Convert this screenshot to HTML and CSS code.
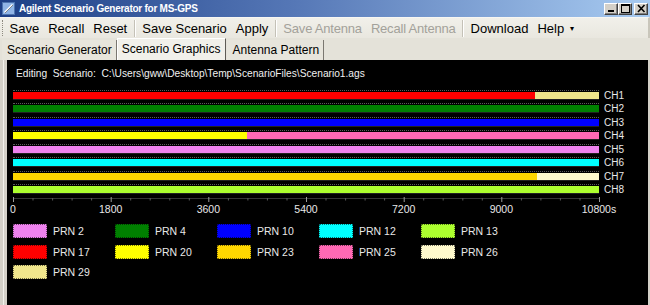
FILE: index.html
```html
<!DOCTYPE html>
<html>
<head>
<meta charset="utf-8">
<link rel="stylesheet" href="styles.css">
</head>
<body>
<div class="window">
  <div class="titlebar">
    <svg class="appicon" width="13" height="13" viewBox="0 0 13 13">
      <rect x="0.5" y="0.5" width="12" height="12" fill="#8fb4e6" stroke="#4d74b0"/>
      <path d="M2.5 10.5 L10.5 2.5" stroke="#ffffff" stroke-width="1.6"/>
      <path d="M3 11 L11 3" stroke="#6b6b6b" stroke-width="0.8"/>
    </svg>
    <span class="title">Agilent Scenario Generator for MS-GPS</span>
    <div class="winbtns">
      <span class="wb">
        <svg width="11" height="9" viewBox="0 0 11 9"><rect x="2" y="6" width="6" height="2" fill="#000"/></svg>
      </span>
      <span class="wb">
        <svg width="11" height="9" viewBox="0 0 11 9"><rect x="1.5" y="0.5" width="8" height="8" fill="none" stroke="#000"/><rect x="1" y="0" width="9" height="2" fill="#000"/></svg>
      </span>
      <span class="wb close">
        <svg width="11" height="9" viewBox="0 0 11 9"><path d="M2 1 L8.5 8 M8.5 1 L2 8" stroke="#000" stroke-width="1.6"/></svg>
      </span>
    </div>
  </div>
  <div class="menubar">
    <span class="grip"></span>
    <span class="mi">Save</span>
    <span class="mi">Recall</span>
    <span class="mi">Reset</span>
    <span class="sep"></span>
    <span class="mi">Save Scenario</span>
    <span class="mi">Apply</span>
    <span class="sep"></span>
    <span class="mi dis">Save Antenna</span>
    <span class="mi dis">Recall Antenna</span>
    <span class="sep"></span>
    <span class="mi">Download</span>
    <span class="mi">Help <span class="arrow">&#9662;</span></span>
  </div>
  <div class="tabbar">
    <span class="tab">Scenario Generator</span>
    <span class="tab active">Scenario Graphics</span>
    <span class="tab">Antenna Pattern</span>
  </div>
  <div class="body">
    <div class="edge-l"></div>
    <div class="panel">
      <div class="editing">Editing&nbsp; Scenario:&nbsp; C:\Users\gww\Desktop\Temp\ScenarioFiles\Scenario1.ags</div>
      <div class="chart">
        <div class="row"><div class="bar"><i class="red" style="width:89.1%"></i><i class="khaki"></i></div><span class="ch">CH1</span></div>
        <div class="row"><div class="bar"><i class="green"></i></div><span class="ch">CH2</span></div>
        <div class="row"><div class="bar"><i class="blue"></i></div><span class="ch">CH3</span></div>
        <div class="row"><div class="bar"><i class="yellow" style="width:39.9%"></i><i class="pink"></i></div><span class="ch">CH4</span></div>
        <div class="row"><div class="bar"><i class="violet"></i></div><span class="ch">CH5</span></div>
        <div class="row"><div class="bar"><i class="cyan"></i></div><span class="ch">CH6</span></div>
        <div class="row"><div class="bar"><i class="gold" style="width:89.5%"></i><i class="chiffon"></i></div><span class="ch">CH7</span></div>
        <div class="row"><div class="bar"><i class="lime"></i></div><span class="ch">CH8</span></div>
      </div>
      <svg class="axis" width="588" height="6" viewBox="0 0 588 6">
        <line x1="0.5" y1="1.5" x2="586.5" y2="1.5" stroke="#6a6a6a" stroke-dasharray="1 1"/>
        <g stroke="#9a9a9a">
          <line x1="0.5" y1="0" x2="0.5" y2="5"/>
          <line x1="98.2" y1="0" x2="98.2" y2="5"/>
          <line x1="195.8" y1="0" x2="195.8" y2="5"/>
          <line x1="293.5" y1="0" x2="293.5" y2="5"/>
          <line x1="391.2" y1="0" x2="391.2" y2="5"/>
          <line x1="488.8" y1="0" x2="488.8" y2="5"/>
          <line x1="586.5" y1="0" x2="586.5" y2="5"/>
        </g>
        <g stroke="#5a5a5a">
          <line x1="20" y1="1" x2="20" y2="3.5"/><line x1="39.6" y1="1" x2="39.6" y2="3.5"/><line x1="59.1" y1="1" x2="59.1" y2="3.5"/><line x1="78.6" y1="1" x2="78.6" y2="3.5"/>
          <line x1="117.7" y1="1" x2="117.7" y2="3.5"/><line x1="137.2" y1="1" x2="137.2" y2="3.5"/><line x1="156.8" y1="1" x2="156.8" y2="3.5"/><line x1="176.3" y1="1" x2="176.3" y2="3.5"/>
          <line x1="215.4" y1="1" x2="215.4" y2="3.5"/><line x1="234.9" y1="1" x2="234.9" y2="3.5"/><line x1="254.4" y1="1" x2="254.4" y2="3.5"/><line x1="274" y1="1" x2="274" y2="3.5"/>
          <line x1="313" y1="1" x2="313" y2="3.5"/><line x1="332.6" y1="1" x2="332.6" y2="3.5"/><line x1="352.1" y1="1" x2="352.1" y2="3.5"/><line x1="371.6" y1="1" x2="371.6" y2="3.5"/>
          <line x1="410.7" y1="1" x2="410.7" y2="3.5"/><line x1="430.2" y1="1" x2="430.2" y2="3.5"/><line x1="449.8" y1="1" x2="449.8" y2="3.5"/><line x1="469.3" y1="1" x2="469.3" y2="3.5"/>
          <line x1="508.4" y1="1" x2="508.4" y2="3.5"/><line x1="527.9" y1="1" x2="527.9" y2="3.5"/><line x1="547.4" y1="1" x2="547.4" y2="3.5"/><line x1="567" y1="1" x2="567" y2="3.5"/>
        </g>
      </svg>
      <div class="ticks">
        <span>0</span><span>1800</span><span>3600</span><span>5400</span><span>7200</span><span>9000</span><span>10800s</span>
      </div>
      <div class="legend">
        <div class="lg"><i class="violet"></i>PRN 2</div>
        <div class="lg"><i class="green"></i>PRN 4</div>
        <div class="lg"><i class="blue"></i>PRN 10</div>
        <div class="lg"><i class="cyan"></i>PRN 12</div>
        <div class="lg"><i class="lime"></i>PRN 13</div>
        <div class="lg"><i class="red"></i>PRN 17</div>
        <div class="lg"><i class="yellow"></i>PRN 20</div>
        <div class="lg"><i class="gold"></i>PRN 23</div>
        <div class="lg"><i class="pink"></i>PRN 25</div>
        <div class="lg"><i class="chiffon"></i>PRN 26</div>
        <div class="lg"><i class="khaki"></i>PRN 29</div>
      </div>
    </div>
    <div class="edge-r"></div>
  </div>
</div>
</body>
</html>
```

FILE: styles.css
```css
* { box-sizing: border-box; }
html, body { margin: 0; padding: 0; }
body { width: 650px; height: 305px; overflow: hidden; background: #d4d0c8; font-family: "Liberation Sans", Arial, sans-serif; }

.window { width: 650px; height: 305px; display: flex; flex-direction: column; background: #d4d0c8; }

.titlebar {
  height: 17px; flex: none;
  display: flex; align-items: center;
  padding: 0 2px 0 2px;
  background: linear-gradient(to right, #1d3f86 0%, #5577b6 45%, #a8cbf1 100%);
}
.appicon { flex: none; margin-right: 4px; }
.title { color: #fff; font-weight: bold; font-size: 10px; letter-spacing: -0.25px; white-space: nowrap; }
.winbtns { margin-left: auto; display: flex; gap: 0; align-items: center; }
.wb {
  width: 14px; height: 12px;
  display: flex; align-items: center; justify-content: center;
  background: #d4d0c8;
  border: 1px solid; border-color: #fff #404040 #404040 #fff;
  box-shadow: inset -1px -1px 0 #808080;
}
.wb.close { margin-left: 2px; }

.menubar {
  height: 21px; flex: none;
  display: flex; align-items: center;
  padding-left: 2px;
  background: linear-gradient(#f1f0ea, #e9e7df);
  border-top: 1px solid #f7f6f2;
  border-right: 2px solid #c9c6bb;
  font-size: 13px; color: #000;
}
.grip { width: 2px; height: 16px; margin-right: 1px; border-left: 1px dotted #8d8a80; }
.mi { padding: 0 4.5px; white-space: nowrap; }
.mi.dis { color: #a3a19a; letter-spacing: -0.2px; }
.arrow { font-size: 8px; margin-left: 2px; position: relative; top: -2px; }
.sep { width: 1px; height: 17px; background: #c4c1b7; box-shadow: 1px 0 0 #fff; margin: 0 3px 0 2px; }

.tabbar {
  height: 22px; flex: none;
  display: flex; align-items: flex-end;
  padding-left: 2px;
  background: #e4e2d9;
  font-size: 12px;
}
.tab {
  height: 20px; padding: 0 4px 0 5px;
  display: flex; align-items: center;
  background: #e7e5dc;
  border-right: 1px solid #7a7770;
  white-space: nowrap;
}
.tab.active {
  height: 22px; padding: 0 5px 1px 4px;
  background: #f1f0ea;
  border-left: 1px solid #fff;
  border-top: 1px solid #fff;
  border-right: 1px solid #5e5b55;
  margin-right: 1px;
}

.body { flex: 1; display: flex; min-height: 0; }
.edge-l { width: 7px; flex: none; background: #d4d0c8; border-left: 3px solid #d4d0c8; box-shadow: inset 1px 0 0 #f2f1ec; }
.edge-r { width: 8px; flex: none; background: #d4d0c8; border-right: 2px solid #d4d0c8; box-shadow: inset -1px 0 0 #a8a59c; }
.panel {
  flex: 1; background: #000; padding: 7px 0 0 6px;
  display: flex; flex-direction: column;
  color: #e8e8e8; font-size: 10px;
}
.editing { font-size: 10.2px; line-height: 13px; padding-left: 3px; white-space: nowrap; color: #f0f0f0; }

.chart { margin-top: 10px; display: grid; grid-auto-rows: 13.43px; }
.row { display: flex; align-items: flex-start; }
.bar {
  width: 586px; height: 10px; display: flex;
  border-top: 1px dotted #5c5c5c; padding-top: 1px;
}
.bar i { display: block; height: 7px; flex: none; border-bottom: 1px solid #222; box-sizing: content-box; }
.bar i:last-child { flex: 1; }
.ch { margin-left: 5px; line-height: 11px; font-size: 10px; }

.red { background: #ff0000; }
.khaki { background: #f0e68c; }
.green { background: #008000; }
.blue { background: #0000ff; }
.yellow { background: #ffff00; }
.pink { background: #ff69b4; }
.violet { background: #ee82ee; }
.cyan { background: #00ffff; }
.gold { background: #ffd700; }
.chiffon { background: #fffacd; }
.lime { background: #adff2f; }

.axis { display: block; margin-top: 0; }
.ticks { display: flex; margin-left: -48.8px; height: 13px; line-height: 13px; font-size: 10.5px; }
.ticks span { width: 97.67px; flex: none; text-align: center; }

.legend {
  margin-top: 8px;
  display: grid; grid-template-columns: repeat(5, 102px);
  grid-auto-rows: 14px; row-gap: 6.3px;
  font-size: 10.5px;
}
.lg { display: flex; align-items: center; white-space: nowrap; }
.lg i { width: 34px; height: 14px; flex: none; margin-right: 6px; border: 1px dotted rgba(0,0,0,0.55); }
```
